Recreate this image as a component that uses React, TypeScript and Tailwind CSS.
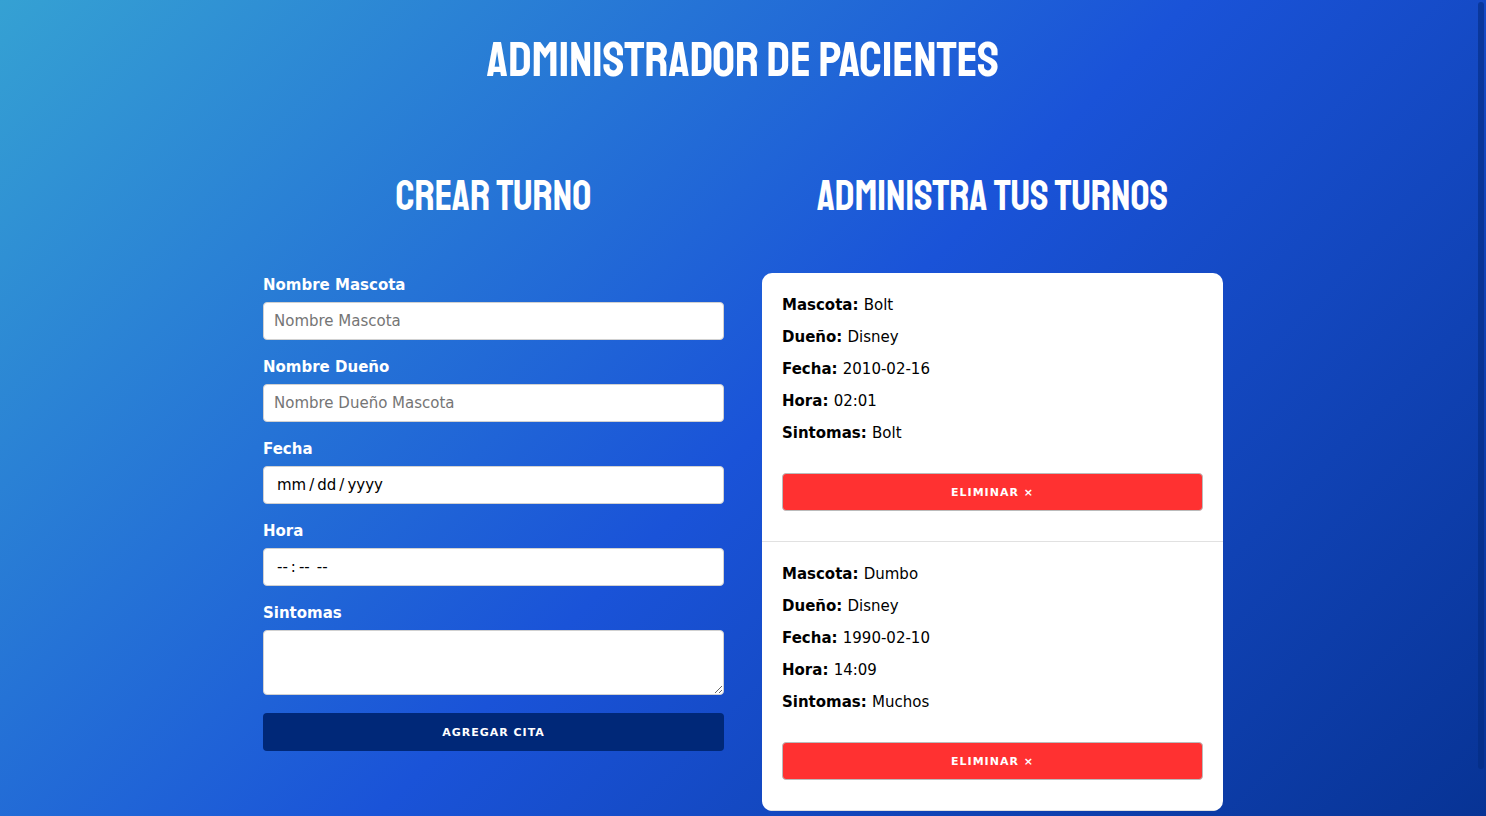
import { useId } from "react";

type Appointment = {
  id: number;
  pet: string;
  owner: string;
  date: string;
  time: string;
  symptoms: string;
};

const appointments: Appointment[] = [
  { id: 1, pet: "Bolt", owner: "Disney", date: "2010-02-16", time: "02:01", symptoms: "Bolt" },
  { id: 2, pet: "Dumbo", owner: "Disney", date: "1990-02-10", time: "14:09", symptoms: "Muchos" },
];

const headingFont =
  "font-['Staatliches','Liberation_Sans_Narrow','Roboto_Condensed',sans-serif] font-normal uppercase text-center text-white";
const control =
  "block h-[38px] w-full rounded-[4px] border border-[#d1d1d1] bg-white px-[10px] py-[6px] text-[15px] text-black placeholder:text-[#757575]";
const dateParts =
  "[&::-webkit-calendar-picker-indicator]:hidden [&::-webkit-datetime-edit-month-field]:px-[3px] [&::-webkit-datetime-edit-day-field]:px-[3px] [&::-webkit-datetime-edit-year-field]:px-[3px] [&::-webkit-datetime-edit-hour-field]:px-[3px] [&::-webkit-datetime-edit-minute-field]:px-[3px] [&::-webkit-datetime-edit-meridiem-field]:px-[3px]";

function Field({ label, type, placeholder }: { label: string; type: string; placeholder?: string }) {
  const id = useId();
  return (
    <div className="mb-[15px]">
      <label htmlFor={id} className="mb-[5px] block text-[15px] leading-6 font-semibold text-white">
        {label}
      </label>
      <input id={id} type={type} placeholder={placeholder} className={`${control} ${dateParts}`} />
    </div>
  );
}

function AppointmentForm() {
  const symptomsId = useId();
  return (
    <form onSubmit={(e) => e.preventDefault()}>
      <Field label="Nombre Mascota" type="text" placeholder="Nombre Mascota" />
      <Field label="Nombre Dueño" type="text" placeholder="Nombre Dueño Mascota" />
      <Field label="Fecha" type="date" />
      <Field label="Hora" type="time" />
      <label htmlFor={symptomsId} className="mb-[5px] block text-[15px] leading-6 font-semibold text-white">
        Sintomas
      </label>
      <textarea
        id={symptomsId}
        className="mb-[18px] block h-[65px] w-full resize rounded-[4px] border border-[#d1d1d1] bg-white px-[10px] py-[6px] text-[15px] text-black"
      />
      <button
        type="submit"
        className="block h-[38px] w-full rounded-[4px] bg-[#002878] pt-0.5 text-[11px] font-semibold tracking-[1px] text-white uppercase"
      >
        Agregar Cita
      </button>
    </form>
  );
}

function Detail({ label, value }: { label: string; value: string }) {
  return (
    <p className="mb-2 text-[15px] leading-6 text-black">
      <strong className="font-bold">{label}: </strong>
      {value}
    </p>
  );
}

function AppointmentCard({ item }: { item: Appointment }) {
  return (
    <li className="border-b border-[#e1e1e1] px-5 pt-5 pb-[30px]">
      <Detail label="Mascota" value={item.pet} />
      <Detail label="Dueño" value={item.owner} />
      <Detail label="Fecha" value={item.date} />
      <Detail label="Hora" value={item.time} />
      <Detail label="Sintomas" value={item.symptoms} />
      <button
        type="button"
        className="mt-7 block h-[38px] w-full rounded-[4px] border border-[#bbb] bg-[#ff3131] pt-0.5 text-[11px] font-semibold tracking-[1px] text-white uppercase"
      >
        Eliminar &times;
      </button>
    </li>
  );
}

export default function App() {
  return (
    <div className="relative min-h-screen bg-[linear-gradient(135deg,#35a1d3_0%,#1a53d8_50%,#063190_100%)] bg-[length:100%_110%] pb-[5px] font-['DejaVu_Sans',sans-serif]">
      <h1 className={`${headingFont} pt-[30px] text-[50px] leading-[60px]`}>Administrador de pacientes</h1>
      <main className="mx-auto grid w-full max-w-[960px] grid-cols-2 gap-[38px] pt-[77px]">
        <section>
          <h2 className={`${headingFont} mb-[46px] text-[42px] leading-[60px]`}>Crear turno</h2>
          <AppointmentForm />
        </section>
        <section>
          <h2 className={`${headingFont} mb-[46px] text-[42px] leading-[60px]`}>Administra tus turnos</h2>
          <ul className="overflow-hidden rounded-[10px] bg-white">
            {appointments.map((item) => (
              <AppointmentCard key={item.id} item={item} />
            ))}
          </ul>
        </section>
      </main>
      <div aria-hidden="true" className="absolute top-[2px] right-[2px] bottom-[47px] w-[6px] rounded-full bg-[#032b80]/60" />
    </div>
  );
}
